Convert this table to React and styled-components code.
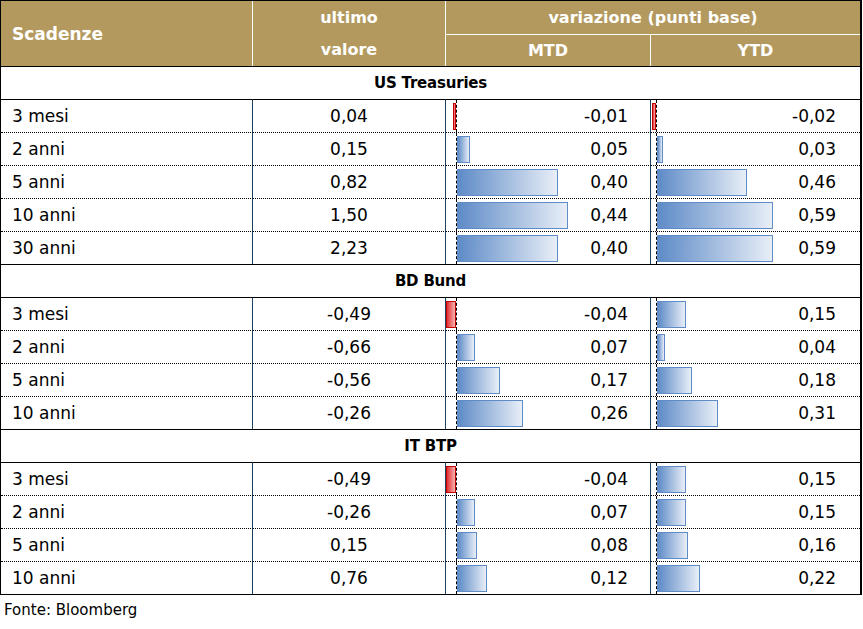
import React from 'react';
import styled, { createGlobalStyle } from 'styled-components';

const GlobalStyle = createGlobalStyle`
  body {
    margin: 0;
    background: #fff;
    color: #000;
    font-family: "DejaVu Sans", "Liberation Sans", sans-serif;
  }
`;

const GOLD = '#b3995e';
const NAVY = '#1b4262';

const Page = styled.div`
  width: 863px;
`;

const Table = styled.table`
  width: 862px;
  table-layout: fixed;
  border-collapse: separate;
  border-spacing: 0;
  border: 1px solid #000;
  border-right-width: 2px;
`;

const HeadRow = styled.tr`
  height: ${(p) => p.$h}px;
`;

const HeadCell = styled.th`
  background: ${GOLD};
  color: #fff;
  font-size: ${(p) => (p.$left ? 17 : 16)}px;
  font-weight: bold;
  padding: ${(p) => (p.$left ? '0 0 0 11px' : '0')};
  text-align: ${(p) => (p.$left ? 'left' : 'center')};
  vertical-align: middle;
  line-height: ${(p) => p.$lh || 'normal'};
  border-right: ${(p) => (p.$last ? 'none' : '1px solid #fff')};
  border-top: ${(p) => (p.$top ? '1px solid #fff' : 'none')};
`;

const SectionRow = styled.tr`
  height: 33px;
`;

const SectionCell = styled.td`
  border-top: 1px solid #000;
  padding: 0;
  text-align: center;
  font-size: 15px;
  font-weight: bold;
  letter-spacing: -0.2px;
`;

const DataRow = styled.tr`
  height: 33px;
  td {
    border-top: 1px ${(p) => (p.$first ? 'solid' : 'dotted')} #000;
  }
`;

const LabelCell = styled.td`
  padding: 0 0 0 11px;
  font-size: 17px;
  border-right: 1px solid ${NAVY};
  white-space: nowrap;
`;

const ValueCell = styled.td`
  padding: 0;
  font-size: 17px;
  text-align: center;
  border-right: 1px solid ${NAVY};
`;

const BarCell = styled.td`
  padding: 0;
  border-right: ${(p) => (p.$last ? 'none' : `1px solid ${NAVY}`)};
`;

const BarBox = styled.div`
  display: flex;
  height: 32px;
  align-items: stretch;
`;

const Plot = styled.div`
  flex: 1;
  display: flex;
  align-items: center;
  margin-left: ${(p) => p.$offset}px;
  border-left: 1px dashed #000;
`;

const Bar = styled.div`
  height: 27px;
  box-sizing: border-box;
  flex: none;
  border: 1px solid ${(p) => (p.$neg ? '#c40000' : '#5f8bc7')};
  background: ${(p) =>
    p.$neg
      ? 'linear-gradient(to right, #e42f2f, #f6b4b4)'
      : 'linear-gradient(to right, #5e8bc7, #e8eef7)'};
`;

const Figure = styled.span`
  align-self: center;
  font-size: 17px;
  padding-right: ${(p) => p.$pad}px;
`;

const Source = styled.div`
  margin-top: 6px;
  padding-left: 4px;
  font-size: 15px;
`;

const groups = [
  {
    title: 'US Treasuries',
    rows: [
      ['3 mesi', 0.04, -0.01, -0.02],
      ['2 anni', 0.15, 0.05, 0.03],
      ['5 anni', 0.82, 0.4, 0.46],
      ['10 anni', 1.5, 0.44, 0.59],
      ['30 anni', 2.23, 0.4, 0.59],
    ],
  },
  {
    title: 'BD Bund',
    rows: [
      ['3 mesi', -0.49, -0.04, 0.15],
      ['2 anni', -0.66, 0.07, 0.04],
      ['5 anni', -0.56, 0.17, 0.18],
      ['10 anni', -0.26, 0.26, 0.31],
    ],
  },
  {
    title: 'IT BTP',
    rows: [
      ['3 mesi', -0.49, -0.04, 0.15],
      ['2 anni', -0.26, 0.07, 0.15],
      ['5 anni', 0.15, 0.08, 0.16],
      ['10 anni', 0.76, 0.12, 0.22],
    ],
  },
];

const fmt = (n) => n.toFixed(2).replace('.', ',');

function DataBar({ value, scale, offset, pad, last }) {
  const w = Math.max(2, Math.round(Math.abs(value) * scale));
  const neg = value < 0;
  return (
    <BarCell $last={last}>
      <BarBox>
        <Plot $offset={offset}>
          <Bar $neg={neg} style={neg ? { width: w, marginLeft: -(w + 1) } : { width: w }} />
        </Plot>
        <Figure $pad={pad}>{fmt(value)}</Figure>
      </BarBox>
    </BarCell>
  );
}

export default function App() {
  return (
    <Page>
      <GlobalStyle />
      <Table>
        <colgroup>
          <col style={{ width: 252 }} />
          <col style={{ width: 193 }} />
          <col style={{ width: 205 }} />
          <col style={{ width: 209 }} />
        </colgroup>
        <thead>
          <HeadRow $h={33}>
            <HeadCell rowSpan={2} $left>
              Scadenze
            </HeadCell>
            <HeadCell rowSpan={2} $lh="32px">
              ultimo
              <br />
              valore
            </HeadCell>
            <HeadCell colSpan={2} $last>
              variazione (punti base)
            </HeadCell>
          </HeadRow>
          <HeadRow $h={32}>
            <HeadCell $top>MTD</HeadCell>
            <HeadCell $top $last>
              YTD
            </HeadCell>
          </HeadRow>
        </thead>
        <tbody>
          {groups.map((g) => (
            <React.Fragment key={g.title}>
              <SectionRow>
                <SectionCell colSpan={4}>{g.title}</SectionCell>
              </SectionRow>
              {g.rows.map(([label, last, mtd, ytd], i) => (
                <DataRow key={label} $first={i === 0}>
                  <LabelCell>{label}</LabelCell>
                  <ValueCell>{fmt(last)}</ValueCell>
                  <DataBar value={mtd} scale={252} offset={10} pad={22} />
                  <DataBar value={ytd} scale={196} offset={5} pad={24} last />
                </DataRow>
              ))}
            </React.Fragment>
          ))}
        </tbody>
      </Table>
      <Source>Fonte: Bloomberg</Source>
    </Page>
  );
}
